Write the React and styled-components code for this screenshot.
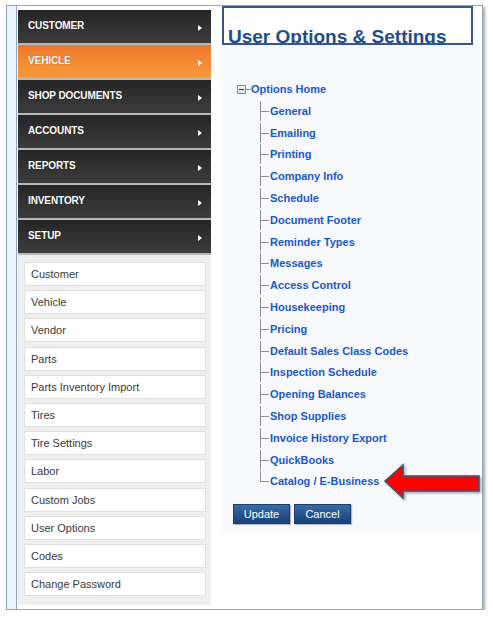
import React from "react";
import styled, { createGlobalStyle } from "styled-components";

const GlobalStyle = createGlobalStyle`
  html, body { margin: 0; padding: 0; background: #ffffff; }
  body { font-family: "Liberation Sans", Arial, sans-serif; }
`;

const Page = styled.div`
  padding: 5px 0 0 6px;
`;

const Frame = styled.div`
  position: relative;
  box-sizing: border-box;
  width: 477px;
  height: 605px;
  border: 1px solid #97a5bd;
  box-shadow: 2px 2px 3px rgba(60, 60, 60, 0.45);
  background: #ffffff;
  display: flex;
`;

const EdgeStrip = styled.div`
  width: 9px;
  flex: none;
  background: #edf3fa;
  border-right: 1px solid #93a2bb;
  margin-right: 1px;
`;

const Sidebar = styled.div`
  width: 193px;
  flex: none;
  margin-top: 4px;
  display: flex;
  flex-direction: column;
`;

const Menu = styled.div`
  display: flex;
  flex-direction: column;
  gap: 2px;
  background: #b8b8b8;
  padding-bottom: 2px;
`;

const MenuItem = styled.div`
  height: 33px;
  box-sizing: border-box;
  padding: 0 9px 0 10px;
  display: flex;
  align-items: center;
  justify-content: space-between;
  background: ${(p) =>
    p.$active
      ? "linear-gradient(#ed782c, #fb9a39)"
      : "linear-gradient(#252525, #3d3d3d)"};
  color: #ffffff;
  font-size: 10px;
  font-weight: bold;
  letter-spacing: -0.1px;
  text-shadow: 0 0 1px rgba(0, 0, 0, 0.5);
`;

const MenuLabel = styled.span`
  margin-top: -3px;
`;

const Caret = styled.span`
  width: 0;
  height: 0;
  margin-top: 3px;
  border-top: 3px solid transparent;
  border-bottom: 3px solid transparent;
  border-left: 4px solid #ffffff;
`;

const SubPanel = styled.div`
  height: 350px;
  box-sizing: border-box;
  background: #efefef;
  padding: 7px 5px 0 6px;
  display: flex;
  flex-direction: column;
  gap: 4.2px;
`;

const SubItem = styled.div`
  height: 24px;
  box-sizing: border-box;
  background: #ffffff;
  border: 1px solid #e0e0e0;
  padding-left: 6px;
  display: flex;
  align-items: center;
  font-size: 11px;
  color: #3a3a3a;
`;

const Content = styled.div`
  margin-left: 11px;
  width: 258px;
  flex: none;
  display: flex;
  flex-direction: column;
`;

const TitleBox = styled.div`
  width: 251px;
  height: 39px;
  box-sizing: border-box;
  border: 2px solid #34568a;
  padding: 18px 0 0 4px;
  overflow: hidden;
`;

const Title = styled.h1`
  margin: 0;
  font-size: 19px;
  line-height: 21px;
  font-weight: bold;
  color: #1f4d8c;
  white-space: nowrap;
`;

const OptionsPanel = styled.div`
  background: #f8f9fd;
  padding: 34px 0 9px 11px;
`;

const Tree = styled.div`
  display: flex;
  flex-direction: column;
  gap: 1.8px;
  margin-left: 4px;
`;

const RootRow = styled.div`
  height: 20px;
  display: flex;
  align-items: center;
`;

const Toggle = styled.span`
  position: relative;
  width: 7px;
  height: 7px;
  flex: none;
  border: 1px solid #7d8ea8;
  background: linear-gradient(#f4f7fb, #d7dfea);
  &::after {
    content: "";
    position: absolute;
    left: 1px;
    right: 1px;
    top: 3px;
    height: 1px;
    background: #2c3e5c;
  }
`;

const RootDash = styled.span`
  width: 5px;
  height: 1px;
  background: #8c8c8c;
`;

const ChildRow = styled.div`
  height: 20px;
  display: flex;
  align-items: center;
  padding-left: 23px;
`;

const Branch = styled.span`
  position: relative;
  align-self: stretch;
  width: 10px;
  flex: none;
  &::before {
    content: "";
    position: absolute;
    left: 0;
    top: 0;
    width: 1px;
    height: ${(p) => (p.$last ? "10px" : "100%")};
    background: #8f8f8f;
  }
  &::after {
    content: "";
    position: absolute;
    left: 0;
    top: 10px;
    width: 9px;
    height: 1px;
    background: #8f8f8f;
  }
`;

const TreeLink = styled.a`
  font-size: 11px;
  font-weight: bold;
  color: #1b57cc;
  text-decoration: none;
  white-space: nowrap;
  cursor: pointer;
`;

const Actions = styled.div`
  display: flex;
  gap: 4px;
  margin-top: 13px;
`;

const Button = styled.button`
  width: 57px;
  height: 20px;
  padding: 0;
  border: 1px solid #1a3c6a;
  background: linear-gradient(#3a6aa8, #174178);
  color: #ffffff;
  font-family: "Liberation Sans", Arial, sans-serif;
  font-size: 11px;
  box-shadow: 1px 1px 1px rgba(0, 0, 0, 0.25);
  cursor: pointer;
`;

const Pointer = styled.svg`
  position: absolute;
  left: 376px;
  top: 457px;
  overflow: visible;
`;

const mainMenu = [
  "CUSTOMER",
  "VEHICLE",
  "SHOP DOCUMENTS",
  "ACCOUNTS",
  "REPORTS",
  "INVENTORY",
  "SETUP",
];

const setupItems = [
  "Customer",
  "Vehicle",
  "Vendor",
  "Parts",
  "Parts Inventory Import",
  "Tires",
  "Tire Settings",
  "Labor",
  "Custom Jobs",
  "User Options",
  "Codes",
  "Change Password",
];

const optionLinks = [
  "General",
  "Emailing",
  "Printing",
  "Company Info",
  "Schedule",
  "Document Footer",
  "Reminder Types",
  "Messages",
  "Access Control",
  "Housekeeping",
  "Pricing",
  "Default Sales Class Codes",
  "Inspection Schedule",
  "Opening Balances",
  "Shop Supplies",
  "Invoice History Export",
  "QuickBooks",
  "Catalog / E-Business",
];

export default function App() {
  return (
    <>
      <GlobalStyle />
      <Page>
        <Frame>
          <EdgeStrip />
          <Sidebar>
            <Menu>
              {mainMenu.map((label) => (
                <MenuItem key={label} $active={label === "VEHICLE"}>
                  <MenuLabel>{label}</MenuLabel>
                  <Caret />
                </MenuItem>
              ))}
            </Menu>
            <SubPanel>
              {setupItems.map((label) => (
                <SubItem key={label}>{label}</SubItem>
              ))}
            </SubPanel>
          </Sidebar>
          <Content>
            <TitleBox>
              <Title>User Options &amp; Settings</Title>
            </TitleBox>
            <OptionsPanel>
              <Tree>
                <RootRow>
                  <Toggle />
                  <RootDash />
                  <TreeLink>Options Home</TreeLink>
                </RootRow>
                {optionLinks.map((label, i) => (
                  <ChildRow key={label}>
                    <Branch $last={i === optionLinks.length - 1} />
                    <TreeLink>{label}</TreeLink>
                  </ChildRow>
                ))}
              </Tree>
              <Actions>
                <Button>Update</Button>
                <Button>Cancel</Button>
              </Actions>
            </OptionsPanel>
          </Content>
          <Pointer width="100" height="38" viewBox="0 0 100 38">
            <defs>
              <filter id="arrowShadow" x="-10%" y="-20%" width="130%" height="150%">
                <feDropShadow dx="1.5" dy="1.5" stdDeviation="1" floodColor="#000" floodOpacity="0.35" />
              </filter>
            </defs>
            <path
              d="M2 18 L20 2 L20 13 L96 13 L96 28 L20 28 L20 35 Z"
              fill="#ff0000"
              stroke="#3e5373"
              strokeWidth="1.6"
              strokeLinejoin="miter"
              filter="url(#arrowShadow)"
            />
          </Pointer>
        </Frame>
      </Page>
    </>
  );
}
